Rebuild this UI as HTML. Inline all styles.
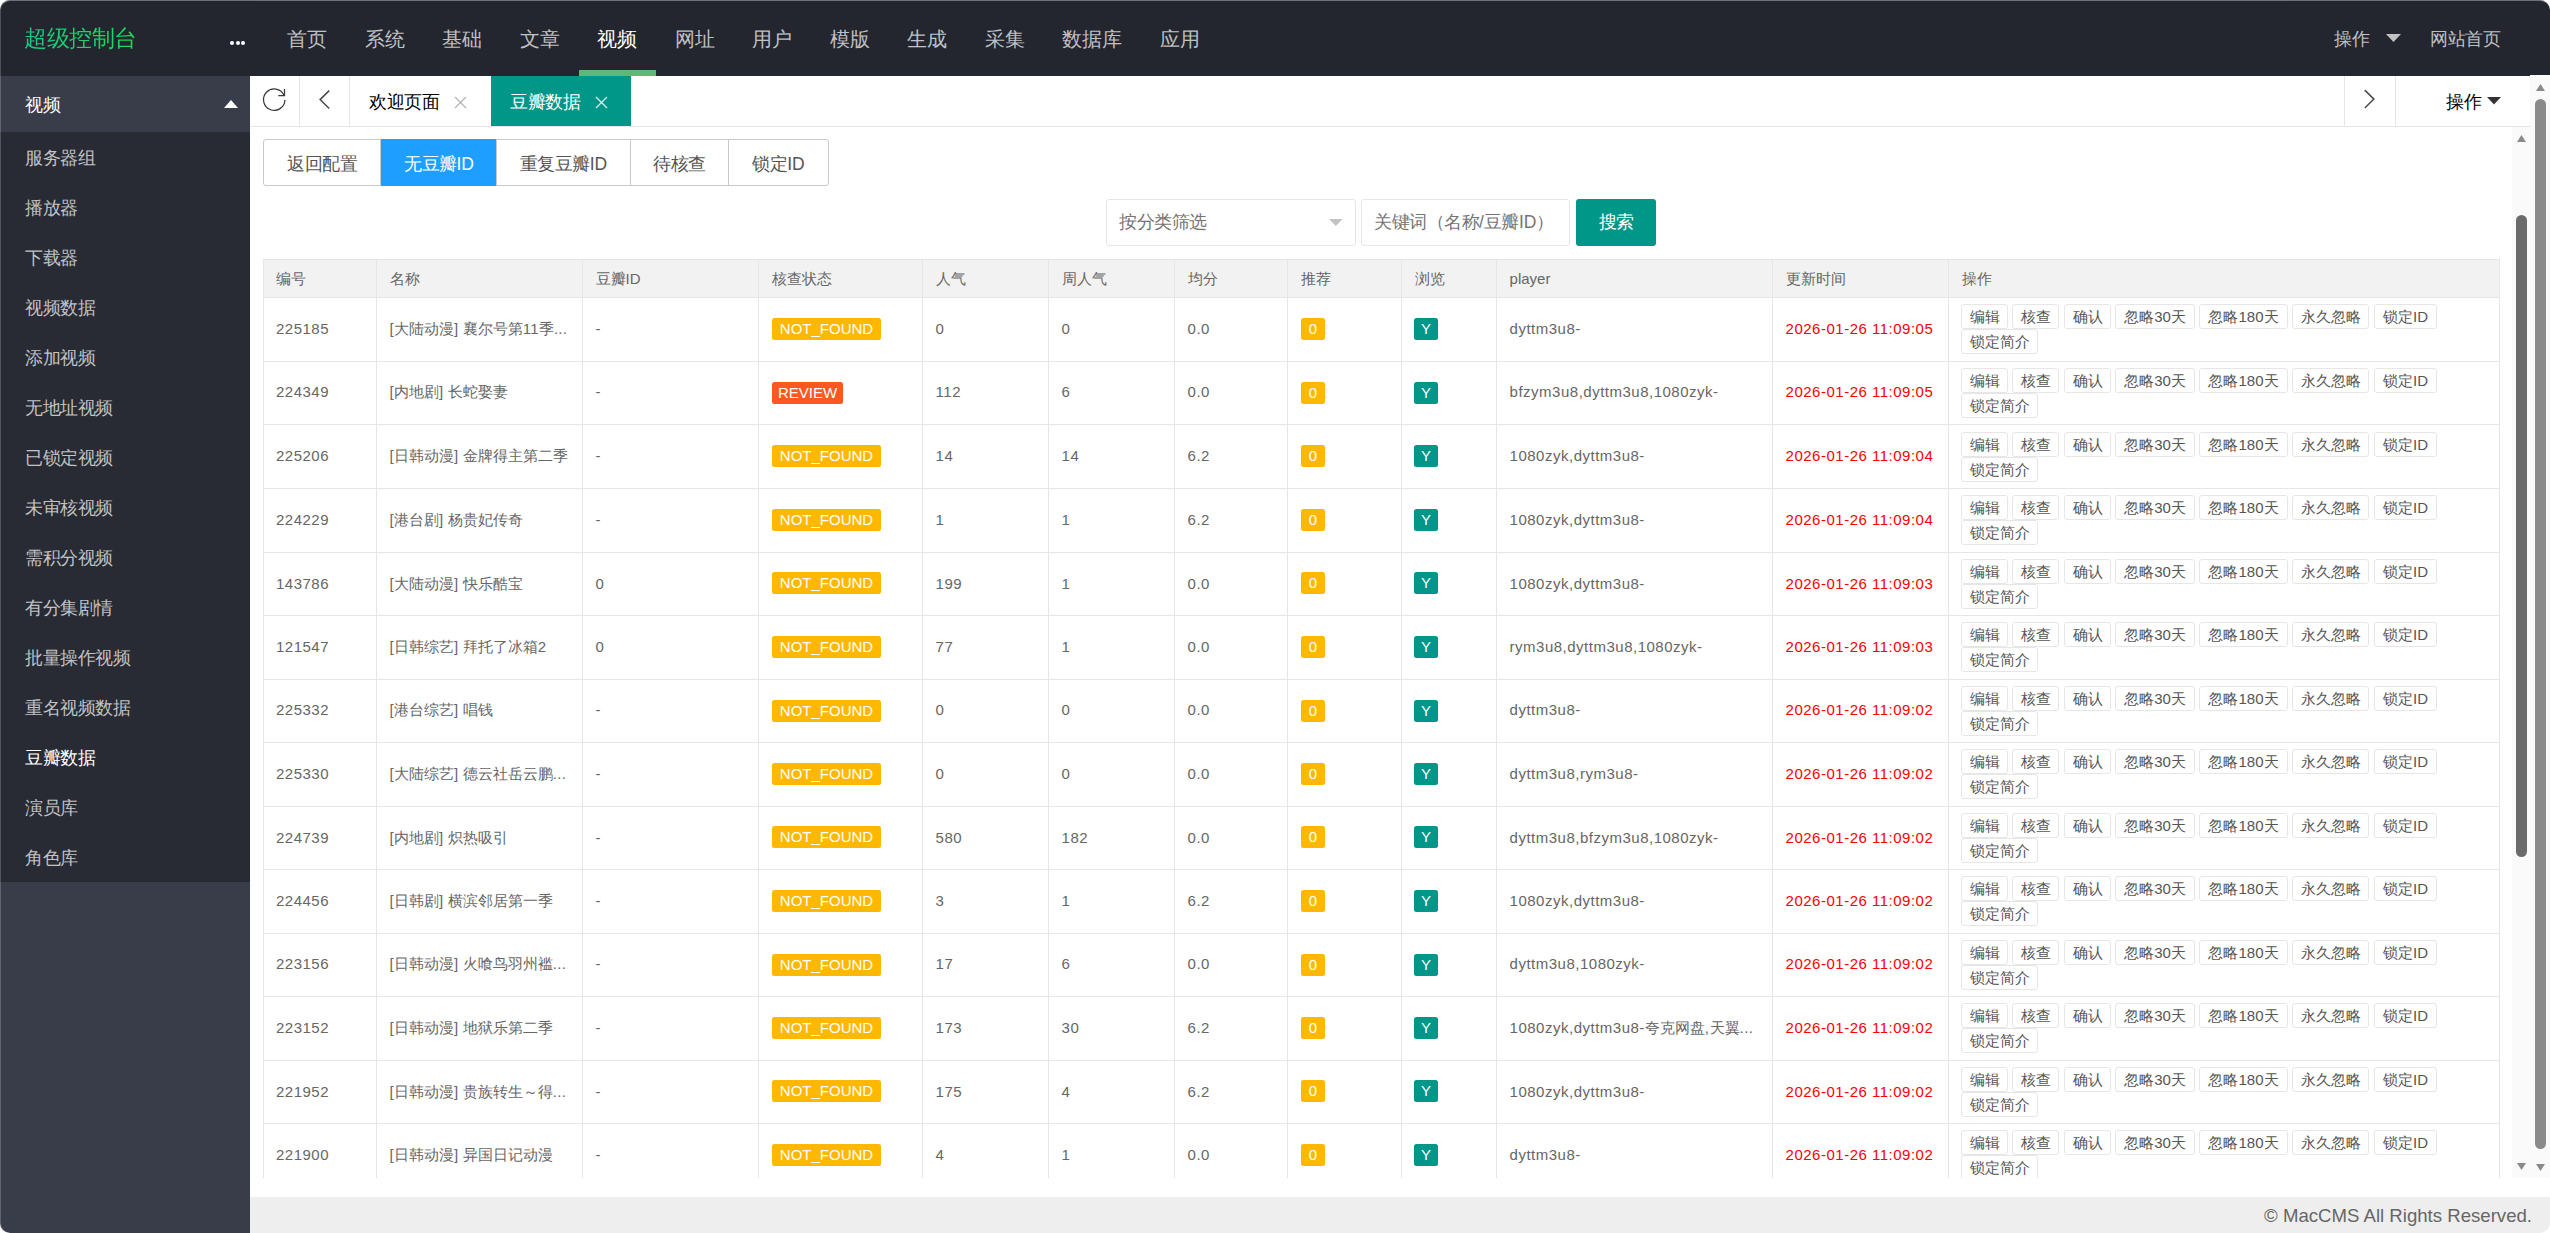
<!DOCTYPE html>
<html><head><meta charset="utf-8"><title>MacCMS</title>
<style>
*{box-sizing:border-box;margin:0;padding:0}
html,body{width:2550px;height:1233px;overflow:hidden;background:#fff;font-family:"Liberation Sans",sans-serif}
.a{position:absolute}
#win{position:absolute;left:0;top:0;width:2550px;height:1233px;border-radius:10px;overflow:hidden;background:#fff}
#wb{position:absolute;left:0;top:0;width:2550px;height:1233px;border-radius:10px;border-left:1px solid rgba(255,255,255,.2);border-top:1px solid rgba(255,255,255,.35);z-index:50}
#hdr{position:absolute;left:0;top:0;width:2550px;height:76px;background:#23262E}
.logo{position:absolute;left:24px;top:22.5px;font-size:22.5px;line-height:32px;white-space:nowrap;background:linear-gradient(90deg,#22c283,#12e05a);-webkit-background-clip:text;background-clip:text;color:transparent}
.dots{position:absolute;top:40px;width:4px;height:4px;border-radius:50%;background:#fff}
.nv{position:absolute;top:0;height:75px;line-height:78px;font-size:20px;color:rgba(255,255,255,.72);text-align:center;white-space:nowrap}
.nv.on{color:#fff}
.bar{position:absolute;left:579px;top:70px;width:77px;height:6px;background:#5FB878}
.rn{position:absolute;top:0;height:75px;line-height:78px;font-size:17.5px;color:rgba(255,255,255,.72);white-space:nowrap}
#side{position:absolute;left:0;top:76px;width:250px;height:1157px;background:#393D49}
.sp{position:absolute;left:0;top:0;width:250px;height:56px;color:#fff;font-size:17.5px;line-height:58px;padding-left:25px}
#child{position:absolute;left:0;top:56px;width:250px;height:750px;background:#282B33}
.si{position:absolute;left:0;width:250px;height:50px;line-height:52px;padding-left:25px;font-size:17.5px;color:rgba(255,255,255,.72);white-space:nowrap}
.si.on{color:#fff}
#tabs{position:absolute;left:250px;top:76px;width:2280px;height:51px;background:#fff;border-bottom:1px solid #e6e6e6}
.tb{position:absolute;top:0;height:50px;border-right:1px solid #e6e6e6}
.tt{position:absolute;top:0;height:50px;line-height:53px;font-size:17.5px;color:#000;white-space:nowrap}
#frame{position:absolute;left:250px;top:127px;width:2280px;height:1051px;background:#fff;overflow:hidden}
.bg{position:absolute;top:12px;height:47px;border:1px solid #C9C9C9;background:#fff;color:#555;font-size:17.5px;line-height:48px;text-align:center;white-space:nowrap}
.inp{position:absolute;top:72px;height:47px;border:1px solid #e6e6e6;border-radius:3px;background:#fff;color:#757575;font-size:17.5px;line-height:45px;white-space:nowrap}
.sbtn{position:absolute;top:72px;left:1326px;width:80px;height:47px;border-radius:3px;background:#009688;color:#fff;font-size:17.5px;line-height:47px;text-align:center}
.vl{position:absolute;width:1px;background:#e6e6e6}
.hl{position:absolute;height:1px;background:#e6e6e6}
.th{position:absolute;font-size:15px;color:#666;line-height:20px;white-space:nowrap}
.td{position:absolute;font-size:15px;color:#666;line-height:20px;white-space:nowrap}
.bd{position:absolute;height:22px;line-height:22px;border-radius:2.5px;color:#fff;font-size:15px;text-align:center;white-space:nowrap}
.ob{position:absolute;height:25px;line-height:23px;border:1px solid #e6e6e6;border-radius:3px;color:#555;font-size:15px;text-align:center;white-space:nowrap;background:#fff}
#foot{position:absolute;left:250px;top:1197px;width:2300px;height:40px;background:#eee}
.ft{position:absolute;right:18px;top:0;line-height:38px;font-size:18.6px;color:#666;white-space:nowrap}
.sbt{position:absolute;background:#fafafa}
.thumb{position:absolute;border-radius:6px}
i{font-style:normal;display:inline-block;width:1em;text-align:center}
</style></head><body>
<div id="win">

<div id="hdr">
<div class="logo"><i>超</i><i>级</i><i>控</i><i>制</i><i>台</i></div>
<div class="dots" style="left:229.80px;top:40.5px"></div>
<div class="dots" style="left:235.50px;top:40.5px"></div>
<div class="dots" style="left:241.20px;top:40.5px"></div>
<div class="nv" style="left:268.25px;width:77.50px"><i>首</i><i>页</i></div>
<div class="nv" style="left:345.75px;width:77.50px"><i>系</i><i>统</i></div>
<div class="nv" style="left:423.25px;width:77.50px"><i>基</i><i>础</i></div>
<div class="nv" style="left:500.75px;width:77.50px"><i>文</i><i>章</i></div>
<div class="nv on" style="left:578.25px;width:77.50px"><i>视</i><i>频</i></div>
<div class="nv" style="left:655.75px;width:77.50px"><i>网</i><i>址</i></div>
<div class="nv" style="left:733.25px;width:77.50px"><i>用</i><i>户</i></div>
<div class="nv" style="left:810.75px;width:77.50px"><i>模</i><i>版</i></div>
<div class="nv" style="left:888.25px;width:77.50px"><i>生</i><i>成</i></div>
<div class="nv" style="left:965.75px;width:77.50px"><i>采</i><i>集</i></div>
<div class="nv" style="left:1043.25px;width:97.50px"><i>数</i><i>据</i><i>库</i></div>
<div class="nv" style="left:1140.75px;width:77.50px"><i>应</i><i>用</i></div>
<div class="bar"></div>
<div class="rn" style="left:2334px"><i>操</i><i>作</i></div>
<svg class="a" style="left:2386px;top:34px" width="16" height="8"><path d="M0 0H15L7.5 8Z" fill="#c2c2c2"/></svg>
<div class="rn" style="left:2430px"><i>网</i><i>站</i><i>首</i><i>页</i></div>
</div>
<div id="side"><div class="sp"><i>视</i><i>频</i></div>
<svg class="a" style="left:224px;top:24px" width="15" height="9"><path d="M0 8H14L7 0Z" fill="#fff"/></svg>
<div id="child">
<div class="si" style="top:0px"><i>服</i><i>务</i><i>器</i><i>组</i></div>
<div class="si" style="top:50px"><i>播</i><i>放</i><i>器</i></div>
<div class="si" style="top:100px"><i>下</i><i>载</i><i>器</i></div>
<div class="si" style="top:150px"><i>视</i><i>频</i><i>数</i><i>据</i></div>
<div class="si" style="top:200px"><i>添</i><i>加</i><i>视</i><i>频</i></div>
<div class="si" style="top:250px"><i>无</i><i>地</i><i>址</i><i>视</i><i>频</i></div>
<div class="si" style="top:300px"><i>已</i><i>锁</i><i>定</i><i>视</i><i>频</i></div>
<div class="si" style="top:350px"><i>未</i><i>审</i><i>核</i><i>视</i><i>频</i></div>
<div class="si" style="top:400px"><i>需</i><i>积</i><i>分</i><i>视</i><i>频</i></div>
<div class="si" style="top:450px"><i>有</i><i>分</i><i>集</i><i>剧</i><i>情</i></div>
<div class="si" style="top:500px"><i>批</i><i>量</i><i>操</i><i>作</i><i>视</i><i>频</i></div>
<div class="si" style="top:550px"><i>重</i><i>名</i><i>视</i><i>频</i><i>数</i><i>据</i></div>
<div class="si on" style="top:600px"><i>豆</i><i>瓣</i><i>数</i><i>据</i></div>
<div class="si" style="top:650px"><i>演</i><i>员</i><i>库</i></div>
<div class="si" style="top:700px"><i>角</i><i>色</i><i>库</i></div>
</div></div>
<div id="tabs">
<div class="tb" style="left:0;width:50px"></div>
<svg class="a" style="left:8px;top:8px" width="32" height="32" viewBox="0 0 32 32"><path d="M26.9 15.9A10.7 10.7 0 1 1 25.9 11.1" fill="none" stroke="#3a3a3a" stroke-width="1.25"/><path d="M26.5 4.9V11.7H20.3" fill="none" stroke="#3a3a3a" stroke-width="1.25"/></svg>
<div class="tb" style="left:50px;width:50px"></div>
<svg class="a" style="left:60px;top:8px" width="32" height="32"><path d="M19.2 6.6L10.1 15.6L19.2 24.5" fill="none" stroke="#4a4a4a" stroke-width="1.5"/></svg>
<div class="tt" style="left:119px"><i>欢</i><i>迎</i><i>页</i><i>面</i></div>
<svg class="a" style="left:204px;top:20px" width="13" height="13"><path d="M1 1L12 12M12 1L1 12" stroke="#b5b5b5" stroke-width="1.3"/></svg>
<div class="a" style="left:241px;top:0;width:140px;height:50px;background:#009688"></div>
<div class="tt" style="left:260px;color:#fff"><i>豆</i><i>瓣</i><i>数</i><i>据</i></div>
<svg class="a" style="left:345px;top:20px" width="13" height="13"><path d="M1 1L12 12M12 1L1 12" stroke="#d9eeec" stroke-width="1.3"/></svg>
<div class="a" style="left:2094px;top:0;width:1px;height:50px;background:#e6e6e6"></div>
<svg class="a" style="left:2104px;top:8px" width="32" height="32"><path d="M10.8 6.1L19.9 15.1L10.8 24" fill="none" stroke="#4a4a4a" stroke-width="1.5"/></svg>
<div class="a" style="left:2145px;top:0;width:1px;height:50px;background:#e6e6e6"></div>
<div class="tt" style="left:2196px"><i>操</i><i>作</i></div>
<svg class="a" style="left:2237px;top:21px" width="15" height="8"><path d="M0 0H14L7 7.5Z" fill="#333"/></svg>
</div>
<div id="frame">
<div class="bg" style="left:13px;width:118px;border-radius:3px 0 0 3px;"><i>返</i><i>回</i><i>配</i><i>置</i></div>
<div class="bg" style="left:131px;width:116px;background:#1E9FFF;border-color:#1E9FFF;color:#fff;"><i>无</i><i>豆</i><i>瓣</i>ID</div>
<div class="bg" style="left:246px;width:135px;"><i>重</i><i>复</i><i>豆</i><i>瓣</i>ID</div>
<div class="bg" style="left:380px;width:99px;"><i>待</i><i>核</i><i>查</i></div>
<div class="bg" style="left:478px;width:101px;border-radius:0 3px 3px 0;"><i>锁</i><i>定</i>ID</div>
<div class="inp" style="left:856px;width:250px;padding-left:12px"><i>按</i><i>分</i><i>类</i><i>筛</i><i>选</i></div>
<svg class="a" style="left:1079px;top:92px" width="14" height="8"><path d="M0 0H13.5L6.75 7Z" fill="#c2c2c2"/></svg>
<div class="inp" style="left:1111px;width:209px;padding-left:12px"><i>关</i><i>键</i><i>词</i><i>（</i><i>名</i><i>称</i>/<i>豆</i><i>瓣</i>ID<i>）</i></div>
<div class="sbtn"><i>搜</i><i>索</i></div>
<div class="a" style="left:13px;top:132px;width:2236px;height:38px;background:#f2f2f2"></div>
<div class="hl" style="left:13px;top:132px;width:2237px"></div>
<div class="hl" style="left:13px;top:170px;width:2237px"></div>
<div class="vl" style="left:13px;top:132px;height:919px"></div>
<div class="vl" style="left:126px;top:132px;height:919px"></div>
<div class="vl" style="left:332px;top:132px;height:919px"></div>
<div class="vl" style="left:508px;top:132px;height:919px"></div>
<div class="vl" style="left:672px;top:132px;height:919px"></div>
<div class="vl" style="left:798px;top:132px;height:919px"></div>
<div class="vl" style="left:924px;top:132px;height:919px"></div>
<div class="vl" style="left:1037px;top:132px;height:919px"></div>
<div class="vl" style="left:1151px;top:132px;height:919px"></div>
<div class="vl" style="left:1246px;top:132px;height:919px"></div>
<div class="vl" style="left:1522px;top:132px;height:919px"></div>
<div class="vl" style="left:1698px;top:132px;height:919px"></div>
<div class="vl" style="left:2249px;top:132px;height:919px"></div>
<div class="th" style="left:26.0px;top:142px"><i>编</i><i>号</i></div>
<div class="th" style="left:139.6px;top:142px"><i>名</i><i>称</i></div>
<div class="th" style="left:345.6px;top:142px"><i>豆</i><i>瓣</i>ID</div>
<div class="th" style="left:521.6px;top:142px"><i>核</i><i>查</i><i>状</i><i>态</i></div>
<div class="th" style="left:685.6px;top:142px"><i>人</i><i>气</i></div>
<div class="th" style="left:811.6px;top:142px"><i>周</i><i>人</i><i>气</i></div>
<div class="th" style="left:937.6px;top:142px"><i>均</i><i>分</i></div>
<div class="th" style="left:1050.6px;top:142px"><i>推</i><i>荐</i></div>
<div class="th" style="left:1164.6px;top:142px"><i>浏</i><i>览</i></div>
<div class="th" style="left:1259.6px;top:142px">player</div>
<div class="th" style="left:1535.6px;top:142px"><i>更</i><i>新</i><i>时</i><i>间</i></div>
<div class="th" style="left:1711.6px;top:142px"><i>操</i><i>作</i></div>
<div class="hl" style="left:13px;top:234px;width:2237px"></div>
<div class="td" style="left:26.0px;top:192px;letter-spacing:0.5px;">225185</div>
<div class="td" style="left:139.6px;top:192px;letter-spacing:0.25px;">[<i>大</i><i>陆</i><i>动</i><i>漫</i>] <i>襄</i><i>尔</i><i>号</i><i>第</i>11<i>季</i>...</div>
<div class="td" style="left:345.6px;top:192px;letter-spacing:0.5px;">-</div>
<div class="td" style="left:685.6px;top:192px;letter-spacing:0.5px;">0</div>
<div class="td" style="left:811.6px;top:192px;letter-spacing:0.5px;">0</div>
<div class="td" style="left:937.6px;top:192px;letter-spacing:0.5px;">0.0</div>
<div class="td" style="left:1259.6px;top:192px;letter-spacing:0.5px;">dyttm3u8-</div>
<div class="td" style="left:1535.6px;top:192px;color:#f00;letter-spacing:0.5px;">2026-01-26 11:09:05</div>
<div class="bd" style="left:522px;top:191px;width:109px;background:#FFB800">NOT_FOUND</div>
<div class="bd" style="left:1051px;top:191px;width:24px;background:#FFB800">0</div>
<div class="bd" style="left:1164px;top:191px;width:24px;background:#009688">Y</div>
<div class="ob" style="left:1711px;top:177px;width:47px"><i>编</i><i>辑</i></div>
<div class="ob" style="left:1762px;top:177px;width:47px"><i>核</i><i>查</i></div>
<div class="ob" style="left:1814px;top:177px;width:47px"><i>确</i><i>认</i></div>
<div class="ob" style="left:1865px;top:177px;width:80px"><i>忽</i><i>略</i>30<i>天</i></div>
<div class="ob" style="left:1949px;top:177px;width:89px"><i>忽</i><i>略</i>180<i>天</i></div>
<div class="ob" style="left:2042px;top:177px;width:77px"><i>永</i><i>久</i><i>忽</i><i>略</i></div>
<div class="ob" style="left:2124px;top:177px;width:63px"><i>锁</i><i>定</i>ID</div>
<div class="ob" style="left:1711px;top:202px;width:77px"><i>锁</i><i>定</i><i>简</i><i>介</i></div>
<div class="hl" style="left:13px;top:297px;width:2237px"></div>
<div class="td" style="left:26.0px;top:255px;letter-spacing:0.5px;">224349</div>
<div class="td" style="left:139.6px;top:255px;letter-spacing:0.25px;">[<i>内</i><i>地</i><i>剧</i>] <i>长</i><i>蛇</i><i>娶</i><i>妻</i></div>
<div class="td" style="left:345.6px;top:255px;letter-spacing:0.5px;">-</div>
<div class="td" style="left:685.6px;top:255px;letter-spacing:0.5px;">112</div>
<div class="td" style="left:811.6px;top:255px;letter-spacing:0.5px;">6</div>
<div class="td" style="left:937.6px;top:255px;letter-spacing:0.5px;">0.0</div>
<div class="td" style="left:1259.6px;top:255px;letter-spacing:0.5px;">bfzym3u8,dyttm3u8,1080zyk-</div>
<div class="td" style="left:1535.6px;top:255px;color:#f00;letter-spacing:0.5px;">2026-01-26 11:09:05</div>
<div class="bd" style="left:522px;top:255px;width:71px;background:#FF5722">REVIEW</div>
<div class="bd" style="left:1051px;top:255px;width:24px;background:#FFB800">0</div>
<div class="bd" style="left:1164px;top:255px;width:24px;background:#009688">Y</div>
<div class="ob" style="left:1711px;top:241px;width:47px"><i>编</i><i>辑</i></div>
<div class="ob" style="left:1762px;top:241px;width:47px"><i>核</i><i>查</i></div>
<div class="ob" style="left:1814px;top:241px;width:47px"><i>确</i><i>认</i></div>
<div class="ob" style="left:1865px;top:241px;width:80px"><i>忽</i><i>略</i>30<i>天</i></div>
<div class="ob" style="left:1949px;top:241px;width:89px"><i>忽</i><i>略</i>180<i>天</i></div>
<div class="ob" style="left:2042px;top:241px;width:77px"><i>永</i><i>久</i><i>忽</i><i>略</i></div>
<div class="ob" style="left:2124px;top:241px;width:63px"><i>锁</i><i>定</i>ID</div>
<div class="ob" style="left:1711px;top:266px;width:77px"><i>锁</i><i>定</i><i>简</i><i>介</i></div>
<div class="hl" style="left:13px;top:361px;width:2237px"></div>
<div class="td" style="left:26.0px;top:319px;letter-spacing:0.5px;">225206</div>
<div class="td" style="left:139.6px;top:319px;letter-spacing:0.25px;">[<i>日</i><i>韩</i><i>动</i><i>漫</i>] <i>金</i><i>牌</i><i>得</i><i>主</i><i>第</i><i>二</i><i>季</i></div>
<div class="td" style="left:345.6px;top:319px;letter-spacing:0.5px;">-</div>
<div class="td" style="left:685.6px;top:319px;letter-spacing:0.5px;">14</div>
<div class="td" style="left:811.6px;top:319px;letter-spacing:0.5px;">14</div>
<div class="td" style="left:937.6px;top:319px;letter-spacing:0.5px;">6.2</div>
<div class="td" style="left:1259.6px;top:319px;letter-spacing:0.5px;">1080zyk,dyttm3u8-</div>
<div class="td" style="left:1535.6px;top:319px;color:#f00;letter-spacing:0.5px;">2026-01-26 11:09:04</div>
<div class="bd" style="left:522px;top:318px;width:109px;background:#FFB800">NOT_FOUND</div>
<div class="bd" style="left:1051px;top:318px;width:24px;background:#FFB800">0</div>
<div class="bd" style="left:1164px;top:318px;width:24px;background:#009688">Y</div>
<div class="ob" style="left:1711px;top:305px;width:47px"><i>编</i><i>辑</i></div>
<div class="ob" style="left:1762px;top:305px;width:47px"><i>核</i><i>查</i></div>
<div class="ob" style="left:1814px;top:305px;width:47px"><i>确</i><i>认</i></div>
<div class="ob" style="left:1865px;top:305px;width:80px"><i>忽</i><i>略</i>30<i>天</i></div>
<div class="ob" style="left:1949px;top:305px;width:89px"><i>忽</i><i>略</i>180<i>天</i></div>
<div class="ob" style="left:2042px;top:305px;width:77px"><i>永</i><i>久</i><i>忽</i><i>略</i></div>
<div class="ob" style="left:2124px;top:305px;width:63px"><i>锁</i><i>定</i>ID</div>
<div class="ob" style="left:1711px;top:330px;width:77px"><i>锁</i><i>定</i><i>简</i><i>介</i></div>
<div class="hl" style="left:13px;top:425px;width:2237px"></div>
<div class="td" style="left:26.0px;top:383px;letter-spacing:0.5px;">224229</div>
<div class="td" style="left:139.6px;top:383px;letter-spacing:0.25px;">[<i>港</i><i>台</i><i>剧</i>] <i>杨</i><i>贵</i><i>妃</i><i>传</i><i>奇</i></div>
<div class="td" style="left:345.6px;top:383px;letter-spacing:0.5px;">-</div>
<div class="td" style="left:685.6px;top:383px;letter-spacing:0.5px;">1</div>
<div class="td" style="left:811.6px;top:383px;letter-spacing:0.5px;">1</div>
<div class="td" style="left:937.6px;top:383px;letter-spacing:0.5px;">6.2</div>
<div class="td" style="left:1259.6px;top:383px;letter-spacing:0.5px;">1080zyk,dyttm3u8-</div>
<div class="td" style="left:1535.6px;top:383px;color:#f00;letter-spacing:0.5px;">2026-01-26 11:09:04</div>
<div class="bd" style="left:522px;top:382px;width:109px;background:#FFB800">NOT_FOUND</div>
<div class="bd" style="left:1051px;top:382px;width:24px;background:#FFB800">0</div>
<div class="bd" style="left:1164px;top:382px;width:24px;background:#009688">Y</div>
<div class="ob" style="left:1711px;top:368px;width:47px"><i>编</i><i>辑</i></div>
<div class="ob" style="left:1762px;top:368px;width:47px"><i>核</i><i>查</i></div>
<div class="ob" style="left:1814px;top:368px;width:47px"><i>确</i><i>认</i></div>
<div class="ob" style="left:1865px;top:368px;width:80px"><i>忽</i><i>略</i>30<i>天</i></div>
<div class="ob" style="left:1949px;top:368px;width:89px"><i>忽</i><i>略</i>180<i>天</i></div>
<div class="ob" style="left:2042px;top:368px;width:77px"><i>永</i><i>久</i><i>忽</i><i>略</i></div>
<div class="ob" style="left:2124px;top:368px;width:63px"><i>锁</i><i>定</i>ID</div>
<div class="ob" style="left:1711px;top:393px;width:77px"><i>锁</i><i>定</i><i>简</i><i>介</i></div>
<div class="hl" style="left:13px;top:488px;width:2237px"></div>
<div class="td" style="left:26.0px;top:447px;letter-spacing:0.5px;">143786</div>
<div class="td" style="left:139.6px;top:447px;letter-spacing:0.25px;">[<i>大</i><i>陆</i><i>动</i><i>漫</i>] <i>快</i><i>乐</i><i>酷</i><i>宝</i></div>
<div class="td" style="left:345.6px;top:447px;letter-spacing:0.5px;">0</div>
<div class="td" style="left:685.6px;top:447px;letter-spacing:0.5px;">199</div>
<div class="td" style="left:811.6px;top:447px;letter-spacing:0.5px;">1</div>
<div class="td" style="left:937.6px;top:447px;letter-spacing:0.5px;">0.0</div>
<div class="td" style="left:1259.6px;top:447px;letter-spacing:0.5px;">1080zyk,dyttm3u8-</div>
<div class="td" style="left:1535.6px;top:447px;color:#f00;letter-spacing:0.5px;">2026-01-26 11:09:03</div>
<div class="bd" style="left:522px;top:445px;width:109px;background:#FFB800">NOT_FOUND</div>
<div class="bd" style="left:1051px;top:445px;width:24px;background:#FFB800">0</div>
<div class="bd" style="left:1164px;top:445px;width:24px;background:#009688">Y</div>
<div class="ob" style="left:1711px;top:432px;width:47px"><i>编</i><i>辑</i></div>
<div class="ob" style="left:1762px;top:432px;width:47px"><i>核</i><i>查</i></div>
<div class="ob" style="left:1814px;top:432px;width:47px"><i>确</i><i>认</i></div>
<div class="ob" style="left:1865px;top:432px;width:80px"><i>忽</i><i>略</i>30<i>天</i></div>
<div class="ob" style="left:1949px;top:432px;width:89px"><i>忽</i><i>略</i>180<i>天</i></div>
<div class="ob" style="left:2042px;top:432px;width:77px"><i>永</i><i>久</i><i>忽</i><i>略</i></div>
<div class="ob" style="left:2124px;top:432px;width:63px"><i>锁</i><i>定</i>ID</div>
<div class="ob" style="left:1711px;top:457px;width:77px"><i>锁</i><i>定</i><i>简</i><i>介</i></div>
<div class="hl" style="left:13px;top:552px;width:2237px"></div>
<div class="td" style="left:26.0px;top:510px;letter-spacing:0.5px;">121547</div>
<div class="td" style="left:139.6px;top:510px;letter-spacing:0.25px;">[<i>日</i><i>韩</i><i>综</i><i>艺</i>] <i>拜</i><i>托</i><i>了</i><i>冰</i><i>箱</i>2</div>
<div class="td" style="left:345.6px;top:510px;letter-spacing:0.5px;">0</div>
<div class="td" style="left:685.6px;top:510px;letter-spacing:0.5px;">77</div>
<div class="td" style="left:811.6px;top:510px;letter-spacing:0.5px;">1</div>
<div class="td" style="left:937.6px;top:510px;letter-spacing:0.5px;">0.0</div>
<div class="td" style="left:1259.6px;top:510px;letter-spacing:0.5px;">rym3u8,dyttm3u8,1080zyk-</div>
<div class="td" style="left:1535.6px;top:510px;color:#f00;letter-spacing:0.5px;">2026-01-26 11:09:03</div>
<div class="bd" style="left:522px;top:509px;width:109px;background:#FFB800">NOT_FOUND</div>
<div class="bd" style="left:1051px;top:509px;width:24px;background:#FFB800">0</div>
<div class="bd" style="left:1164px;top:509px;width:24px;background:#009688">Y</div>
<div class="ob" style="left:1711px;top:495px;width:47px"><i>编</i><i>辑</i></div>
<div class="ob" style="left:1762px;top:495px;width:47px"><i>核</i><i>查</i></div>
<div class="ob" style="left:1814px;top:495px;width:47px"><i>确</i><i>认</i></div>
<div class="ob" style="left:1865px;top:495px;width:80px"><i>忽</i><i>略</i>30<i>天</i></div>
<div class="ob" style="left:1949px;top:495px;width:89px"><i>忽</i><i>略</i>180<i>天</i></div>
<div class="ob" style="left:2042px;top:495px;width:77px"><i>永</i><i>久</i><i>忽</i><i>略</i></div>
<div class="ob" style="left:2124px;top:495px;width:63px"><i>锁</i><i>定</i>ID</div>
<div class="ob" style="left:1711px;top:520px;width:77px"><i>锁</i><i>定</i><i>简</i><i>介</i></div>
<div class="hl" style="left:13px;top:615px;width:2237px"></div>
<div class="td" style="left:26.0px;top:573px;letter-spacing:0.5px;">225332</div>
<div class="td" style="left:139.6px;top:573px;letter-spacing:0.25px;">[<i>港</i><i>台</i><i>综</i><i>艺</i>] <i>唱</i><i>钱</i></div>
<div class="td" style="left:345.6px;top:573px;letter-spacing:0.5px;">-</div>
<div class="td" style="left:685.6px;top:573px;letter-spacing:0.5px;">0</div>
<div class="td" style="left:811.6px;top:573px;letter-spacing:0.5px;">0</div>
<div class="td" style="left:937.6px;top:573px;letter-spacing:0.5px;">0.0</div>
<div class="td" style="left:1259.6px;top:573px;letter-spacing:0.5px;">dyttm3u8-</div>
<div class="td" style="left:1535.6px;top:573px;color:#f00;letter-spacing:0.5px;">2026-01-26 11:09:02</div>
<div class="bd" style="left:522px;top:573px;width:109px;background:#FFB800">NOT_FOUND</div>
<div class="bd" style="left:1051px;top:573px;width:24px;background:#FFB800">0</div>
<div class="bd" style="left:1164px;top:573px;width:24px;background:#009688">Y</div>
<div class="ob" style="left:1711px;top:559px;width:47px"><i>编</i><i>辑</i></div>
<div class="ob" style="left:1762px;top:559px;width:47px"><i>核</i><i>查</i></div>
<div class="ob" style="left:1814px;top:559px;width:47px"><i>确</i><i>认</i></div>
<div class="ob" style="left:1865px;top:559px;width:80px"><i>忽</i><i>略</i>30<i>天</i></div>
<div class="ob" style="left:1949px;top:559px;width:89px"><i>忽</i><i>略</i>180<i>天</i></div>
<div class="ob" style="left:2042px;top:559px;width:77px"><i>永</i><i>久</i><i>忽</i><i>略</i></div>
<div class="ob" style="left:2124px;top:559px;width:63px"><i>锁</i><i>定</i>ID</div>
<div class="ob" style="left:1711px;top:584px;width:77px"><i>锁</i><i>定</i><i>简</i><i>介</i></div>
<div class="hl" style="left:13px;top:679px;width:2237px"></div>
<div class="td" style="left:26.0px;top:637px;letter-spacing:0.5px;">225330</div>
<div class="td" style="left:139.6px;top:637px;letter-spacing:0.25px;">[<i>大</i><i>陆</i><i>综</i><i>艺</i>] <i>德</i><i>云</i><i>社</i><i>岳</i><i>云</i><i>鹏</i>...</div>
<div class="td" style="left:345.6px;top:637px;letter-spacing:0.5px;">-</div>
<div class="td" style="left:685.6px;top:637px;letter-spacing:0.5px;">0</div>
<div class="td" style="left:811.6px;top:637px;letter-spacing:0.5px;">0</div>
<div class="td" style="left:937.6px;top:637px;letter-spacing:0.5px;">0.0</div>
<div class="td" style="left:1259.6px;top:637px;letter-spacing:0.5px;">dyttm3u8,rym3u8-</div>
<div class="td" style="left:1535.6px;top:637px;color:#f00;letter-spacing:0.5px;">2026-01-26 11:09:02</div>
<div class="bd" style="left:522px;top:636px;width:109px;background:#FFB800">NOT_FOUND</div>
<div class="bd" style="left:1051px;top:636px;width:24px;background:#FFB800">0</div>
<div class="bd" style="left:1164px;top:636px;width:24px;background:#009688">Y</div>
<div class="ob" style="left:1711px;top:622px;width:47px"><i>编</i><i>辑</i></div>
<div class="ob" style="left:1762px;top:622px;width:47px"><i>核</i><i>查</i></div>
<div class="ob" style="left:1814px;top:622px;width:47px"><i>确</i><i>认</i></div>
<div class="ob" style="left:1865px;top:622px;width:80px"><i>忽</i><i>略</i>30<i>天</i></div>
<div class="ob" style="left:1949px;top:622px;width:89px"><i>忽</i><i>略</i>180<i>天</i></div>
<div class="ob" style="left:2042px;top:622px;width:77px"><i>永</i><i>久</i><i>忽</i><i>略</i></div>
<div class="ob" style="left:2124px;top:622px;width:63px"><i>锁</i><i>定</i>ID</div>
<div class="ob" style="left:1711px;top:647px;width:77px"><i>锁</i><i>定</i><i>简</i><i>介</i></div>
<div class="hl" style="left:13px;top:742px;width:2237px"></div>
<div class="td" style="left:26.0px;top:701px;letter-spacing:0.5px;">224739</div>
<div class="td" style="left:139.6px;top:701px;letter-spacing:0.25px;">[<i>内</i><i>地</i><i>剧</i>] <i>炽</i><i>热</i><i>吸</i><i>引</i></div>
<div class="td" style="left:345.6px;top:701px;letter-spacing:0.5px;">-</div>
<div class="td" style="left:685.6px;top:701px;letter-spacing:0.5px;">580</div>
<div class="td" style="left:811.6px;top:701px;letter-spacing:0.5px;">182</div>
<div class="td" style="left:937.6px;top:701px;letter-spacing:0.5px;">0.0</div>
<div class="td" style="left:1259.6px;top:701px;letter-spacing:0.5px;">dyttm3u8,bfzym3u8,1080zyk-</div>
<div class="td" style="left:1535.6px;top:701px;color:#f00;letter-spacing:0.5px;">2026-01-26 11:09:02</div>
<div class="bd" style="left:522px;top:699px;width:109px;background:#FFB800">NOT_FOUND</div>
<div class="bd" style="left:1051px;top:699px;width:24px;background:#FFB800">0</div>
<div class="bd" style="left:1164px;top:699px;width:24px;background:#009688">Y</div>
<div class="ob" style="left:1711px;top:686px;width:47px"><i>编</i><i>辑</i></div>
<div class="ob" style="left:1762px;top:686px;width:47px"><i>核</i><i>查</i></div>
<div class="ob" style="left:1814px;top:686px;width:47px"><i>确</i><i>认</i></div>
<div class="ob" style="left:1865px;top:686px;width:80px"><i>忽</i><i>略</i>30<i>天</i></div>
<div class="ob" style="left:1949px;top:686px;width:89px"><i>忽</i><i>略</i>180<i>天</i></div>
<div class="ob" style="left:2042px;top:686px;width:77px"><i>永</i><i>久</i><i>忽</i><i>略</i></div>
<div class="ob" style="left:2124px;top:686px;width:63px"><i>锁</i><i>定</i>ID</div>
<div class="ob" style="left:1711px;top:711px;width:77px"><i>锁</i><i>定</i><i>简</i><i>介</i></div>
<div class="hl" style="left:13px;top:806px;width:2237px"></div>
<div class="td" style="left:26.0px;top:764px;letter-spacing:0.5px;">224456</div>
<div class="td" style="left:139.6px;top:764px;letter-spacing:0.25px;">[<i>日</i><i>韩</i><i>剧</i>] <i>横</i><i>滨</i><i>邻</i><i>居</i><i>第</i><i>一</i><i>季</i></div>
<div class="td" style="left:345.6px;top:764px;letter-spacing:0.5px;">-</div>
<div class="td" style="left:685.6px;top:764px;letter-spacing:0.5px;">3</div>
<div class="td" style="left:811.6px;top:764px;letter-spacing:0.5px;">1</div>
<div class="td" style="left:937.6px;top:764px;letter-spacing:0.5px;">6.2</div>
<div class="td" style="left:1259.6px;top:764px;letter-spacing:0.5px;">1080zyk,dyttm3u8-</div>
<div class="td" style="left:1535.6px;top:764px;color:#f00;letter-spacing:0.5px;">2026-01-26 11:09:02</div>
<div class="bd" style="left:522px;top:763px;width:109px;background:#FFB800">NOT_FOUND</div>
<div class="bd" style="left:1051px;top:763px;width:24px;background:#FFB800">0</div>
<div class="bd" style="left:1164px;top:763px;width:24px;background:#009688">Y</div>
<div class="ob" style="left:1711px;top:749px;width:47px"><i>编</i><i>辑</i></div>
<div class="ob" style="left:1762px;top:749px;width:47px"><i>核</i><i>查</i></div>
<div class="ob" style="left:1814px;top:749px;width:47px"><i>确</i><i>认</i></div>
<div class="ob" style="left:1865px;top:749px;width:80px"><i>忽</i><i>略</i>30<i>天</i></div>
<div class="ob" style="left:1949px;top:749px;width:89px"><i>忽</i><i>略</i>180<i>天</i></div>
<div class="ob" style="left:2042px;top:749px;width:77px"><i>永</i><i>久</i><i>忽</i><i>略</i></div>
<div class="ob" style="left:2124px;top:749px;width:63px"><i>锁</i><i>定</i>ID</div>
<div class="ob" style="left:1711px;top:774px;width:77px"><i>锁</i><i>定</i><i>简</i><i>介</i></div>
<div class="hl" style="left:13px;top:869px;width:2237px"></div>
<div class="td" style="left:26.0px;top:827px;letter-spacing:0.5px;">223156</div>
<div class="td" style="left:139.6px;top:827px;letter-spacing:0.25px;">[<i>日</i><i>韩</i><i>动</i><i>漫</i>] <i>火</i><i>喰</i><i>鸟</i><i>羽</i><i>州</i><i>褴</i>...</div>
<div class="td" style="left:345.6px;top:827px;letter-spacing:0.5px;">-</div>
<div class="td" style="left:685.6px;top:827px;letter-spacing:0.5px;">17</div>
<div class="td" style="left:811.6px;top:827px;letter-spacing:0.5px;">6</div>
<div class="td" style="left:937.6px;top:827px;letter-spacing:0.5px;">0.0</div>
<div class="td" style="left:1259.6px;top:827px;letter-spacing:0.5px;">dyttm3u8,1080zyk-</div>
<div class="td" style="left:1535.6px;top:827px;color:#f00;letter-spacing:0.5px;">2026-01-26 11:09:02</div>
<div class="bd" style="left:522px;top:827px;width:109px;background:#FFB800">NOT_FOUND</div>
<div class="bd" style="left:1051px;top:827px;width:24px;background:#FFB800">0</div>
<div class="bd" style="left:1164px;top:827px;width:24px;background:#009688">Y</div>
<div class="ob" style="left:1711px;top:813px;width:47px"><i>编</i><i>辑</i></div>
<div class="ob" style="left:1762px;top:813px;width:47px"><i>核</i><i>查</i></div>
<div class="ob" style="left:1814px;top:813px;width:47px"><i>确</i><i>认</i></div>
<div class="ob" style="left:1865px;top:813px;width:80px"><i>忽</i><i>略</i>30<i>天</i></div>
<div class="ob" style="left:1949px;top:813px;width:89px"><i>忽</i><i>略</i>180<i>天</i></div>
<div class="ob" style="left:2042px;top:813px;width:77px"><i>永</i><i>久</i><i>忽</i><i>略</i></div>
<div class="ob" style="left:2124px;top:813px;width:63px"><i>锁</i><i>定</i>ID</div>
<div class="ob" style="left:1711px;top:838px;width:77px"><i>锁</i><i>定</i><i>简</i><i>介</i></div>
<div class="hl" style="left:13px;top:933px;width:2237px"></div>
<div class="td" style="left:26.0px;top:891px;letter-spacing:0.5px;">223152</div>
<div class="td" style="left:139.6px;top:891px;letter-spacing:0.25px;">[<i>日</i><i>韩</i><i>动</i><i>漫</i>] <i>地</i><i>狱</i><i>乐</i><i>第</i><i>二</i><i>季</i></div>
<div class="td" style="left:345.6px;top:891px;letter-spacing:0.5px;">-</div>
<div class="td" style="left:685.6px;top:891px;letter-spacing:0.5px;">173</div>
<div class="td" style="left:811.6px;top:891px;letter-spacing:0.5px;">30</div>
<div class="td" style="left:937.6px;top:891px;letter-spacing:0.5px;">6.2</div>
<div class="td" style="left:1259.6px;top:891px;letter-spacing:0.5px;">1080zyk,dyttm3u8-<i>夸</i><i>克</i><i>网</i><i>盘</i>,<i>天</i><i>翼</i>...</div>
<div class="td" style="left:1535.6px;top:891px;color:#f00;letter-spacing:0.5px;">2026-01-26 11:09:02</div>
<div class="bd" style="left:522px;top:890px;width:109px;background:#FFB800">NOT_FOUND</div>
<div class="bd" style="left:1051px;top:890px;width:24px;background:#FFB800">0</div>
<div class="bd" style="left:1164px;top:890px;width:24px;background:#009688">Y</div>
<div class="ob" style="left:1711px;top:876px;width:47px"><i>编</i><i>辑</i></div>
<div class="ob" style="left:1762px;top:876px;width:47px"><i>核</i><i>查</i></div>
<div class="ob" style="left:1814px;top:876px;width:47px"><i>确</i><i>认</i></div>
<div class="ob" style="left:1865px;top:876px;width:80px"><i>忽</i><i>略</i>30<i>天</i></div>
<div class="ob" style="left:1949px;top:876px;width:89px"><i>忽</i><i>略</i>180<i>天</i></div>
<div class="ob" style="left:2042px;top:876px;width:77px"><i>永</i><i>久</i><i>忽</i><i>略</i></div>
<div class="ob" style="left:2124px;top:876px;width:63px"><i>锁</i><i>定</i>ID</div>
<div class="ob" style="left:1711px;top:901px;width:77px"><i>锁</i><i>定</i><i>简</i><i>介</i></div>
<div class="hl" style="left:13px;top:996px;width:2237px"></div>
<div class="td" style="left:26.0px;top:955px;letter-spacing:0.5px;">221952</div>
<div class="td" style="left:139.6px;top:955px;letter-spacing:0.25px;">[<i>日</i><i>韩</i><i>动</i><i>漫</i>] <i>贵</i><i>族</i><i>转</i><i>生</i><i>～</i><i>得</i>...</div>
<div class="td" style="left:345.6px;top:955px;letter-spacing:0.5px;">-</div>
<div class="td" style="left:685.6px;top:955px;letter-spacing:0.5px;">175</div>
<div class="td" style="left:811.6px;top:955px;letter-spacing:0.5px;">4</div>
<div class="td" style="left:937.6px;top:955px;letter-spacing:0.5px;">6.2</div>
<div class="td" style="left:1259.6px;top:955px;letter-spacing:0.5px;">1080zyk,dyttm3u8-</div>
<div class="td" style="left:1535.6px;top:955px;color:#f00;letter-spacing:0.5px;">2026-01-26 11:09:02</div>
<div class="bd" style="left:522px;top:953px;width:109px;background:#FFB800">NOT_FOUND</div>
<div class="bd" style="left:1051px;top:953px;width:24px;background:#FFB800">0</div>
<div class="bd" style="left:1164px;top:953px;width:24px;background:#009688">Y</div>
<div class="ob" style="left:1711px;top:940px;width:47px"><i>编</i><i>辑</i></div>
<div class="ob" style="left:1762px;top:940px;width:47px"><i>核</i><i>查</i></div>
<div class="ob" style="left:1814px;top:940px;width:47px"><i>确</i><i>认</i></div>
<div class="ob" style="left:1865px;top:940px;width:80px"><i>忽</i><i>略</i>30<i>天</i></div>
<div class="ob" style="left:1949px;top:940px;width:89px"><i>忽</i><i>略</i>180<i>天</i></div>
<div class="ob" style="left:2042px;top:940px;width:77px"><i>永</i><i>久</i><i>忽</i><i>略</i></div>
<div class="ob" style="left:2124px;top:940px;width:63px"><i>锁</i><i>定</i>ID</div>
<div class="ob" style="left:1711px;top:965px;width:77px"><i>锁</i><i>定</i><i>简</i><i>介</i></div>
<div class="hl" style="left:13px;top:1060px;width:2237px"></div>
<div class="td" style="left:26.0px;top:1018px;letter-spacing:0.5px;">221900</div>
<div class="td" style="left:139.6px;top:1018px;letter-spacing:0.25px;">[<i>日</i><i>韩</i><i>动</i><i>漫</i>] <i>异</i><i>国</i><i>日</i><i>记</i><i>动</i><i>漫</i></div>
<div class="td" style="left:345.6px;top:1018px;letter-spacing:0.5px;">-</div>
<div class="td" style="left:685.6px;top:1018px;letter-spacing:0.5px;">4</div>
<div class="td" style="left:811.6px;top:1018px;letter-spacing:0.5px;">1</div>
<div class="td" style="left:937.6px;top:1018px;letter-spacing:0.5px;">0.0</div>
<div class="td" style="left:1259.6px;top:1018px;letter-spacing:0.5px;">dyttm3u8-</div>
<div class="td" style="left:1535.6px;top:1018px;color:#f00;letter-spacing:0.5px;">2026-01-26 11:09:02</div>
<div class="bd" style="left:522px;top:1017px;width:109px;background:#FFB800">NOT_FOUND</div>
<div class="bd" style="left:1051px;top:1017px;width:24px;background:#FFB800">0</div>
<div class="bd" style="left:1164px;top:1017px;width:24px;background:#009688">Y</div>
<div class="ob" style="left:1711px;top:1003px;width:47px"><i>编</i><i>辑</i></div>
<div class="ob" style="left:1762px;top:1003px;width:47px"><i>核</i><i>查</i></div>
<div class="ob" style="left:1814px;top:1003px;width:47px"><i>确</i><i>认</i></div>
<div class="ob" style="left:1865px;top:1003px;width:80px"><i>忽</i><i>略</i>30<i>天</i></div>
<div class="ob" style="left:1949px;top:1003px;width:89px"><i>忽</i><i>略</i>180<i>天</i></div>
<div class="ob" style="left:2042px;top:1003px;width:77px"><i>永</i><i>久</i><i>忽</i><i>略</i></div>
<div class="ob" style="left:2124px;top:1003px;width:63px"><i>锁</i><i>定</i>ID</div>
<div class="ob" style="left:1711px;top:1028px;width:77px"><i>锁</i><i>定</i><i>简</i><i>介</i></div>
<div class="sbt" style="left:2262px;top:0;width:18px;height:1051px"></div>
<svg class="a" style="left:2267px;top:8px" width="10" height="7"><path d="M0 7H9L4.5 0Z" fill="#8a8a8a"/></svg>
<div class="thumb" style="left:2266px;top:88px;width:11px;height:642px;background:#6b6b6b"></div>
<svg class="a" style="left:2267px;top:1036px" width="10" height="7"><path d="M0 0H9L4.5 7Z" fill="#8a8a8a"/></svg>
</div>
<div class="sbt" style="left:2530px;top:75px;width:20px;height:1103px"></div>
<svg class="a" style="left:2536px;top:84px" width="10" height="7"><path d="M0 7H9L4.5 0Z" fill="#8a8a8a"/></svg>
<div class="thumb" style="left:2535px;top:99px;width:11px;height:1050px;background:#8a8a8a"></div>
<svg class="a" style="left:2536px;top:1164px" width="10" height="7"><path d="M0 0H9L4.5 7Z" fill="#8a8a8a"/></svg>
<div id="foot"><div class="ft">© MacCMS All Rights Reserved.</div></div>
</div><div id="wb"></div></body></html>
